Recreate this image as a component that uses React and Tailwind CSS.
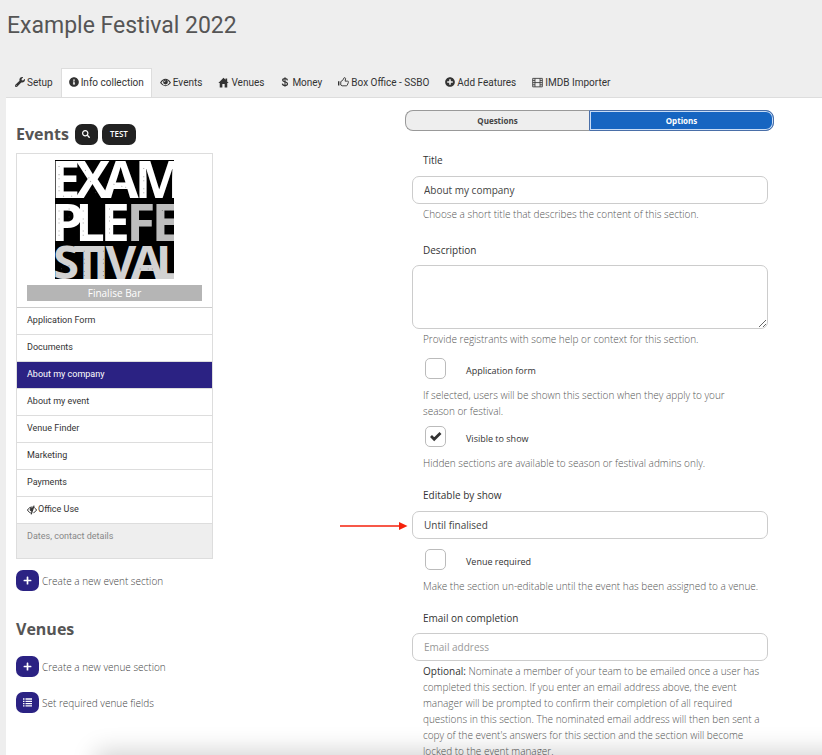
import { useState } from 'react';
import { FaWrench, FaInfoCircle, FaPlusCircle, FaSearch, FaPlus } from 'react-icons/fa';

const EyeIcon = ({ className }) => (
  <svg viewBox="0 0 24 24" className={className} fill="none" stroke="currentColor">
    <path d="M1.500 12.500C5 6.500 8.500 5 12 5s7 1.500 10.500 7.500C19 17.500 15.500 19 12 19s-7-1.500-10.500-6.500z" strokeWidth="2.400" />
    <circle cx="12" cy="11" r="5.200" fill="currentColor" stroke="none" />
    <path d="M9.500 11a2.500 2.500 0 0 1 2.500-2.500" stroke="#fff" strokeWidth="1.500" />
  </svg>
);

const EyeSlashIcon = ({ className }) => (
  <svg viewBox="0 0 24 24" className={className} fill="none" stroke="currentColor" strokeWidth="2.400">
    <path d="M9 19C5.500 18 3 15.500 1.200 12 4.500 6.500 8 4.500 14 5" />
    <path d="M17.500 6c2 1.500 3.800 3.500 5.300 6-2 3.500-4.300 5.500-7.300 6.500" />
    <path d="M8 8.500c-1 4 .5 6 3 6.500l2.500-8z" fill="currentColor" />
    <path d="M17 1.500L10 22.500" strokeWidth="2.800" />
  </svg>
);

const HomeIcon = ({ className }) => (
  <svg viewBox="0 0 24 24" className={className} fill="currentColor">
    <path d="M12 1.500L.8 13h3v10h5.700v-7.500h5V23h5.700V13h3L20 9.700V3h-3.600v3z" />
  </svg>
);

const DollarIcon = ({ className }) => (
  <svg viewBox="0 0 24 24" className={className} fill="none" stroke="currentColor" strokeWidth="3">
    <path d="M18 8c-.4-2.800-2.600-4.200-6-4.200S6.400 5.300 6.400 7.800c0 5.400 11.600 2.600 11.600 8.200 0 2.800-2.500 4.300-6 4.300s-6-1.500-6.300-4.500" />
    <path d="M12 .5v23" strokeWidth="2.400" />
  </svg>
);

const ThumbIcon = ({ className }) => (
  <svg viewBox="0 0 24 24" className={className} fill="none" stroke="currentColor" strokeWidth="2">
    <path d="M1.500 9.500v9" strokeWidth="3" />
    <path d="M6 10l4-2.500 3.500-6c1.800-.4 3.300.8 3 2.700L15.500 9h5.700c1.600 0 2 1.500 1.500 2.700l-2.500 6c-.4 1-1 1.500-2 1.500H9L6 17.500z" />
  </svg>
);

const FilmIcon = ({ className }) => (
  <svg viewBox="0 0 24 24" className={className} fill="none" stroke="currentColor" strokeWidth="1.800">
    <path d="M1.500 3h21v18.500h-21zM6.500 3v18.500M17.500 3v18.500M6.500 12.200h11" />
    <path d="M1.500 7.500h5M1.500 12.200h5M1.500 17h5M17.500 7.500h5M17.500 12.200h5M17.500 17h5" />
  </svg>
);

const ListIcon = ({ size }) => (
  <svg viewBox="0 0 9 9" width={size} height={size} fill="none" stroke="currentColor" strokeWidth="1.300">
    <path d="M0 1h1.500M0 3.300h1.500M0 5.600h1.500M0 7.900h1.500M2.500 1H9M2.500 3.300H9M2.500 5.600H9M2.500 7.900H9" />
  </svg>
);

const tabs = [
  { name: 'Setup', icon: FaWrench, size: 'w-[10px] h-[10px]' },
  { name: 'Info collection', icon: FaInfoCircle, size: 'w-[10px] h-[10px]' },
  { name: 'Events', icon: EyeIcon, size: 'w-[11px] h-[11px]' },
  { name: 'Venues', icon: HomeIcon, size: 'w-[11px] h-[11px]' },
  { name: 'Money', icon: DollarIcon, size: 'w-[10px] h-[10px]' },
  { name: 'Box Office - SSBO', icon: ThumbIcon, size: 'w-[11px] h-[11px]' },
  { name: 'Add Features', icon: FaPlusCircle, size: 'w-[10px] h-[10px]' },
  { name: 'IMDB Importer', icon: FilmIcon, size: 'w-[11px] h-[11px]' },
];

const sections = [
  'Application Form',
  'Documents',
  'About my company',
  'About my event',
  'Venue Finder',
  'Marketing',
  'Payments',
  'Office Use',
];

const FestivalLogo = () => (
  <svg viewBox="0 0 118 118" className="w-[68%]" role="img" aria-label="Example Festival" style={{ fontFamily: '"Open Sans", sans-serif' }}>
    <rect width="118" height="118" fill="#000" />
    <g fontSize="52" fontWeight="700">
      <text x="-4 20 47 79" y="38" fill="#fff">EXAM</text>
      <text x="-4 20 45" y="80" fill="#fff">PLE</text>
      <text x="71 96" y="80" fill="#bdbdbd">FE</text>
      <text x="-2 18 38 50 75 100" y="118" fontSize="47" fill="#d2d2d2">STIVAL</text>
    </g>
    {/* worn print marks */}
    <g stroke="#555" strokeWidth="1" strokeDasharray="1 7 1 3" opacity="0.500">
      <path d="M4 6v30M8 36h12M30 10l12 26M58 24l16 4M88 8v28" />
      <path d="M4 50v28M14 48v14M28 50v28M54 48v28M106 50h10" />
      <path d="M6 108l10-4M29 90v26M48 90v26M84 108h16" />
    </g>
  </svg>
);

const ActionLink = ({ icon: Icon, children }) => (
  <a href="#" className="flex items-center gap-[3px] text-[10px] leading-4 font-light text-[#444]">
    <span className="flex items-center justify-center w-[23px] h-[21px] rounded-[7px] bg-[#2b2283] text-white">
      <Icon size={9} />
    </span>
    {children}
  </a>
);

const inputClass = 'block w-full rounded-[7px] border border-[#ccc] bg-white px-[11px] text-[10px] leading-4 text-[#444] outline-none placeholder:text-[#999] placeholder:font-normal';
const labelClass = 'block px-[11px] text-[10px] leading-4 font-medium text-[#333]';
const helpClass = 'pl-[11px] pr-1 text-[10px] leading-4 font-light text-[#555]';

const CheckField = ({ id, label, help, checked, onChange, className }) => (
  <div className={className}>
    <div className="flex items-center gap-5 px-[13px]">
      <span className="relative w-[21px] h-[21px]">
        <input
          id={id}
          type="checkbox"
          checked={checked}
          onChange={onChange}
          className="peer block appearance-none w-full h-full rounded-[5px] border border-[#bbb] bg-white"
        />
        <svg viewBox="0 0 21 21" className="absolute inset-0 hidden peer-checked:block pointer-events-none" fill="none" stroke="#333" strokeWidth="2.800" aria-hidden="true">
          <path d="M6 10l3.200 3.200L15.500 7" />
        </svg>
      </span>
      <label htmlFor={id} className="pt-1 text-[9px] leading-4 font-medium text-[#333]">{label}</label>
    </div>
    <p className={`${helpClass} mt-2`}>{help}</p>
  </div>
);

export default function App() {
  const [active, setActive] = useState('About my company');
  const [title, setTitle] = useState('About my company');
  const [applicationForm, setApplicationForm] = useState(false);
  const [visible, setVisible] = useState(true);
  const [venueRequired, setVenueRequired] = useState(false);

  return (
    <div className="h-screen overflow-hidden bg-[#eee] text-[#333]" style={{ fontFamily: '"Open Sans", "Noto Sans", sans-serif' }}>
      <h1 className="pl-[7px] pt-[10px] font-[Roboto] text-[23px] leading-8 text-[#555]">Example Festival 2022</h1>

      {/* Tabs */}
      <nav className="flex pl-[7px] mt-[26px] font-[Roboto]">
        {tabs.map((t) => (
          <a
            key={t.name}
            href="#"
            className={`relative flex items-center gap-[2px] h-[29px] px-[7px] pb-[2px] border border-b-0 text-[10px] whitespace-nowrap ${t.name === 'Info collection' ? 'z-10 bg-white border-[#ddd] -mb-px' : 'border-transparent'}`}
          >
            <t.icon className={t.size} />
            {t.name}
          </a>
        ))}
      </nav>

      <main className="flex items-start ml-[6px] min-h-screen bg-white border-t border-[#ddd]">
        {/* Sidebar */}
        <aside className="w-[197px] ml-[10px] pt-6 shrink-0">
          <div className="flex items-center gap-1">
            <h2 className="text-[16px] leading-6 font-bold text-[#555] mr-[2px]">Events</h2>
            <button aria-label="Search" className="flex items-center justify-center w-[23px] h-[21px] rounded-[7px] bg-[#222] text-white">
              <FaSearch size={8} />
            </button>
            <button className="h-[21px] px-2 rounded-[7px] bg-[#222] text-white text-[8px] font-semibold">TEST</button>
          </div>

          <div className="mt-[7px] border border-[#ddd]">
            <div className="px-[10px] pt-[6px] pb-[6px] border-b border-[#ccc]">
              <div className="flex justify-center"><FestivalLogo /></div>
              <div className="mt-[6px] h-4 bg-[#b5b5b5] text-white text-[10px] leading-4 text-center">Finalise Bar</div>
            </div>
            <ul className="font-[Roboto]">
              {sections.map((s) => (
                <li key={s} className="border-b border-[#ddd]">
                  <button
                    onClick={() => setActive(s)}
                    className={`flex items-center gap-px w-full h-[26px] px-[10px] text-left text-[9px] ${active === s ? 'bg-[#2b2283] text-white' : ''}`}
                  >
                    {s === 'Office Use' && <EyeSlashIcon className="w-[10px] h-[10px]" />}
                    {s}
                  </button>
                </li>
              ))}
            </ul>
            <div className="h-[34px] px-[10px] pt-1 bg-[#eee] font-[Roboto] text-[9px] leading-4 text-[#888]">Dates, contact details</div>
          </div>

          <div className="mt-[11px]">
            <ActionLink icon={FaPlus}>Create a new event section</ActionLink>
          </div>
          <h2 className="mt-[26px] mb-[15px] text-[16px] leading-6 font-bold text-[#555]">Venues</h2>
          <div className="flex flex-col gap-[15px]">
            <ActionLink icon={FaPlus}>Create a new venue section</ActionLink>
            <ActionLink icon={ListIcon}>Set required venue fields</ActionLink>
          </div>
        </aside>

        {/* Section options */}
        <div className="flex-1 ml-48 mr-12 pt-3">
          <div className="flex h-[21px] text-[8px] font-bold">
            <button className="flex-1 rounded-l-[8px] border border-[#999] border-r-0 bg-[#eee] text-[#444]">Questions</button>
            <button className="flex-1 rounded-r-[8px] border border-[#4a6fa8] bg-[#1665c1] text-white shadow-[inset_0_0_0_1px_#c8dcf5]">Options</button>
          </div>

          <form className="pl-[7px] pr-[6px] mt-[21px]" onSubmit={(e) => e.preventDefault()}>
            <label htmlFor="title" className={labelClass}>Title</label>
            <input id="title" value={title} onChange={(e) => setTitle(e.target.value)} className={`${inputClass} h-7 mt-2`} />
            <p className={`${helpClass} mt-[2px]`}>Choose a short title that describes the content of this section.</p>

            <label htmlFor="description" className={`${labelClass} mt-5`}>Description</label>
            <textarea id="description" className={`${inputClass} h-16 mt-[7px] resize-y`} />
            <p className={`${helpClass} mt-[2px]`}>Provide registrants with some help or context for this section.</p>

            <CheckField
              id="application"
              label="Application form"
              help={'If selected, users will be shown this section when they apply to your season\u00a0or festival.'}
              checked={applicationForm}
              onChange={(e) => setApplicationForm(e.target.checked)}
              className="mt-[11px]"
            />
            <CheckField
              id="visible"
              label="Visible to show"
              help="Hidden sections are available to season or festival admins only."
              checked={visible}
              onChange={(e) => setVisible(e.target.checked)}
              className="mt-[7px]"
            />

            <label htmlFor="editable" className={`${labelClass} mt-4`}>Editable by show</label>
            <div className="relative mt-2">
              <select id="editable" className={`${inputClass} appearance-none h-7`}>
                <option>Until finalised</option>
              </select>
              <svg viewBox="0 0 68 10" className="absolute right-full mr-1 top-[10px] w-[68px] h-[10px]" aria-hidden="true">
                <path d="M0 5h60" stroke="#f5210b" strokeWidth="1.500" />
                <path d="M59 1l8.500 4-8.500 4z" fill="#f5210b" />
              </svg>
            </div>

            <CheckField
              id="venue"
              label="Venue required"
              help="Make the section un-editable until the event has been assigned to a venue."
              checked={venueRequired}
              onChange={(e) => setVenueRequired(e.target.checked)}
              className="mt-[10px]"
            />

            <label htmlFor="email" className={`${labelClass} mt-4`}>Email on completion</label>
            <input id="email" type="email" placeholder="Email address" className={`${inputClass} h-7 mt-[7px]`} />
            <p className={`${helpClass} mt-[2px]`}>
              <b className="font-medium text-[#333]">Optional:</b> Nominate a member of your team to be emailed once a user has completed this section. If you enter an email address above, the event manager will be prompted to confirm their completion of all required questions in this section. The nominated email address will then ben sent a copy of the event's answers for this section and the section will become locked to the event manager.
            </p>
          </form>
        </div>
      </main>

      {/* Shadow of the bar below the fold */}
      <div className="fixed top-full left-[100px] -right-10 h-10 shadow-[0_0_24px_4px_rgba(0,0,0,0.180)] pointer-events-none" />
    </div>
  );
}
